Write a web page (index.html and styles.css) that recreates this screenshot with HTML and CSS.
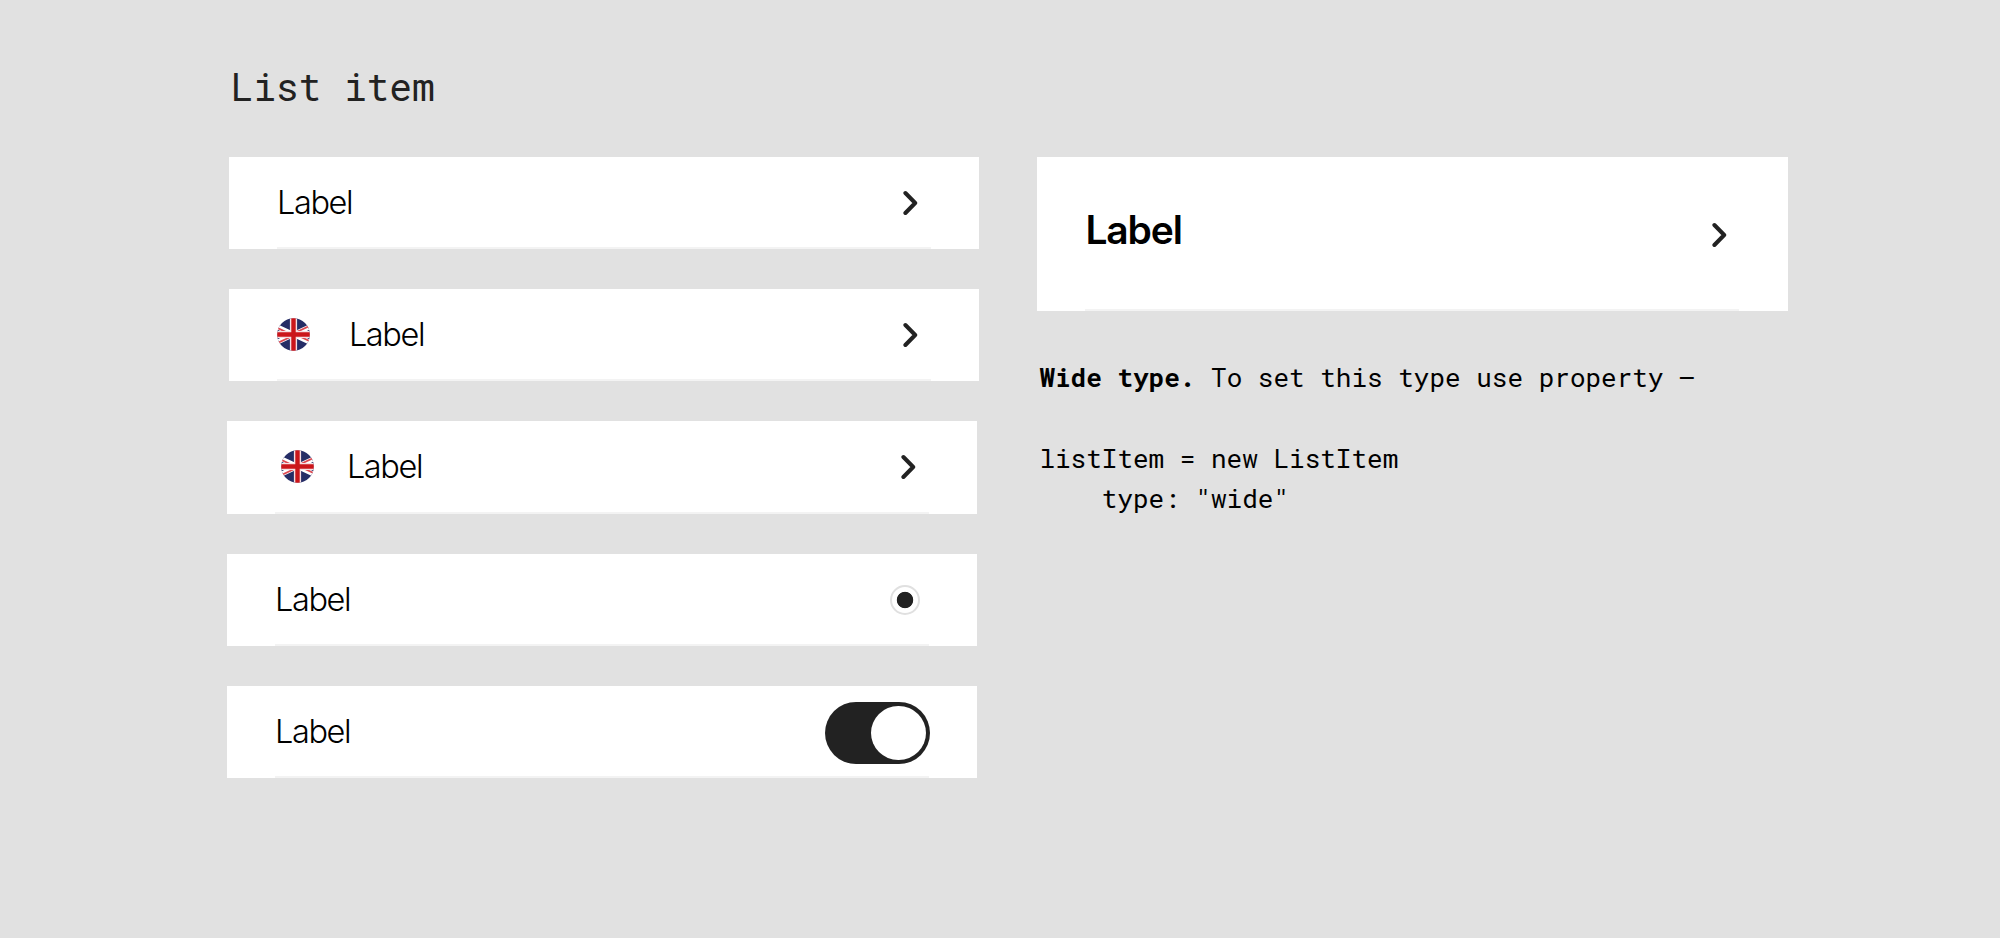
FILE: index.html
```html
<!DOCTYPE html>
<html lang="en">
<head>
<meta charset="utf-8">
<title>List item</title>
<link rel="stylesheet" href="styles.css">
</head>
<body>
<svg class="defs" width="0" height="0" aria-hidden="true">
  <defs>
    <clipPath id="round"><circle cx="16.5" cy="16.5" r="16.3"/></clipPath>
    <symbol id="chevron" viewBox="0 0 16 26"><path d="M3.4 3 13.2 13 3.4 23" fill="none" stroke="#222" stroke-width="4" stroke-linecap="round" stroke-linejoin="round"/></symbol>
    <symbol id="flag" viewBox="0 0 33 33">
      <g clip-path="url(#round)">
        <path fill="#252d66" d="M0 0h33v33H0z"/>
        <path stroke="#fff" stroke-width="4.800" d="M-8 5 41 28M41 5-8 28"/>
        <path stroke="#dc4a52" stroke-width="1.900" d="M-8 6 16.500 17.500M41 27 16.500 15.500M41 4 16.500 15.500M-8 29 16.500 17.500"/>
        <path stroke="#f6dfe2" stroke-width="7.200" d="M16.500 0v33M0 16.500h33"/>
        <path stroke="#cb161b" stroke-width="4.400" d="M16.500 0v33M0 16.500h33"/>
      </g>
    </symbol>
  </defs>
</svg>
<main class="page">
  <h1 class="title">List item</h1>
  <div class="columns">
    <div class="list">
      <div class="item"><span class="label">Label</span><svg class="chevron"><use href="#chevron"/></svg></div>
      <div class="item"><svg class="flag"><use href="#flag"/></svg><span class="label">Label</span><svg class="chevron"><use href="#chevron"/></svg></div>
      <div class="item item-shifted item-inset"><svg class="flag flag-inset"><use href="#flag"/></svg><span class="label">Label</span><svg class="chevron"><use href="#chevron"/></svg></div>
      <div class="item item-shifted"><span class="label">Label</span><span class="radio"></span></div>
      <div class="item item-shifted"><span class="label">Label</span><span class="toggle"><span class="knob"></span></span></div>
    </div>
    <div class="wide-column">
      <div class="item item-wide"><span class="label label-wide">Label</span><svg class="chevron"><use href="#chevron"/></svg></div>
      <div class="note"><p class="line"><b>Wide type.</b> To set this type use property –</p><pre class="code">listItem = new ListItem
    type: "wide"</pre></div>
    </div>
  </div>
</main>
</body>
</html>
```
FILE: styles.css
```css
body {
  margin: 0;
  background: #e1e1e1;
  color: #000;
}
.defs { position: absolute; }
.page { padding: 61px 0 0 229px; }
.title {
  margin: 0 0 46px 1.500px;
  font: 400 38px/50px "Roboto Mono", "DejaVu Sans Mono", monospace;
  letter-spacing: -0.120px;
  color: #222;
}
.columns {
  display: flex;
  align-items: flex-start;
  gap: 58px;
}
.list {
  width: 750.400px;
  display: grid;
  gap: 40px;
}
.item {
  box-sizing: border-box;
  width: 750.400px;
  height: 92px;
  padding: 0 48.200px 0 48px;
  display: flex;
  align-items: center;
  background: linear-gradient(#f3f3f3, #f3f3f3) 48px 100% / 654px 2px no-repeat #fff;
}
.item-shifted { margin-left: -2px; }
.item-inset {
  height: 93px;
  padding-bottom: 1px;
}
.label {
  flex: 1;
  font: 300 32.5px/40px Inter, sans-serif;
  letter-spacing: -1.400px;
  padding-bottom: 1px;
}
.chevron {
  width: 16px;
  height: 26px;
  margin-right: 13.200px;
}
.flag {
  width: 33px;
  height: 33px;
  margin: 0 39.200px 1.500px -0.300px;
}
.flag-inset { margin: 0 33.200px 1.500px 5.700px; }
.radio {
  box-sizing: border-box;
  width: 30px;
  height: 30px;
  margin-right: 9px;
  border: 2px solid #e0e0e0;
  border-radius: 50%;
  background: radial-gradient(circle, #222 7.800px, #fff 8.600px);
}
.toggle {
  box-sizing: border-box;
  width: 104.500px;
  height: 62px;
  padding: 4px;
  margin-top: 2px;
  margin-right: -0.500px;
  display: flex;
  justify-content: flex-end;
  border-radius: 31px;
  background: #222;
}
.knob {
  width: 54.500px;
  height: 54px;
  border-radius: 50%;
  background: #fff;
}
.item-wide {
  width: 750.600px;
  height: 154px;
}
.label-wide {
  font-size: 39px;
  font-weight: 600;
  letter-spacing: -1.150px;
  padding-bottom: 9px;
}
.item-wide .chevron {
  margin-top: 2px;
  margin-right: 12.400px;
}
.note {
  padding: 46px 0 0 2px;
  font: 400 26px/40px "Roboto Mono", "DejaVu Sans Mono", monospace;
}
.line { margin: 0 0 41px; }
.code {
  margin: 0;
  font: inherit;
}
```
